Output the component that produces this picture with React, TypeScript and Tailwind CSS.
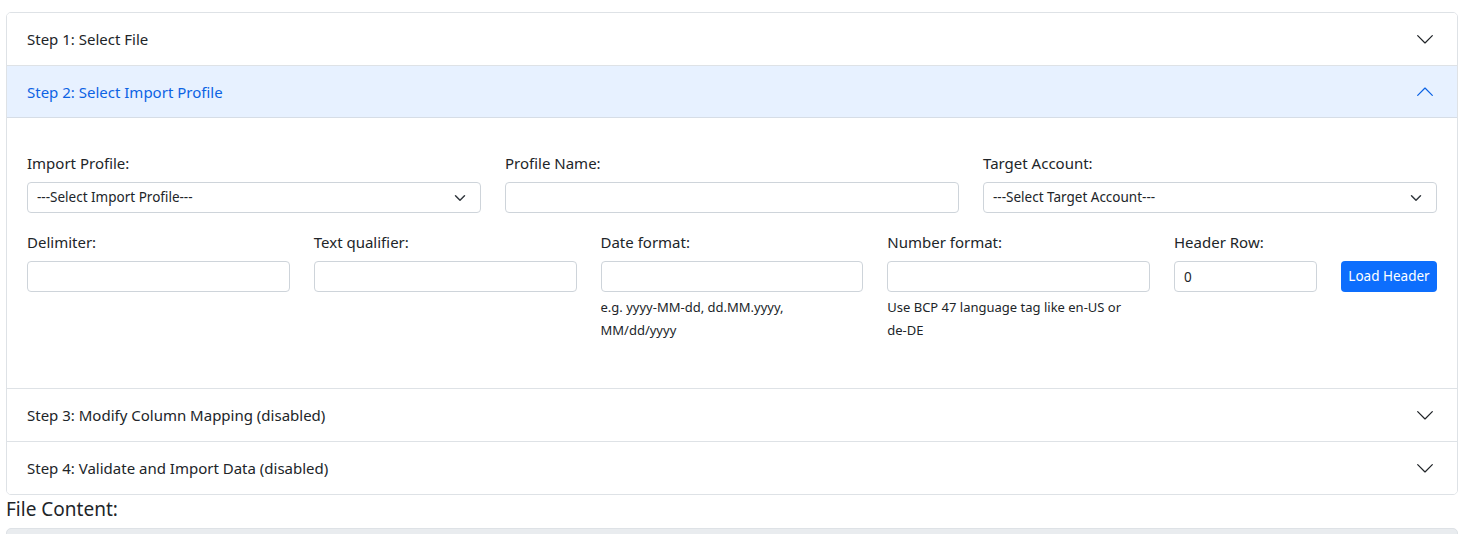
import { useState } from 'react';

const font = { fontFamily: '"Noto Sans", "Open Sans", Arial, sans-serif' };

function Chevron({ up = false, active = false }: { up?: boolean; active?: boolean }) {
  return (
    <svg
      width="18"
      height="18"
      viewBox="0 0 16 16"
      fill="none"
      stroke={active ? '#0c63e4' : '#212529'}
      strokeWidth="1.1"
      className={up ? 'rotate-180' : ''}
    >
      <path d="M1.5 5l6.5 6.5 6.5-6.5" strokeLinecap="round" strokeLinejoin="round" />
    </svg>
  );
}

function SelectBox({ text }: { text: string }) {
  return (
    <div className="flex h-[31px] items-center justify-between rounded-[4px] border border-[#ced4da] bg-white pl-[9px] pr-[14px] text-[13.5px] text-[#212529]">
      <span>{text}</span>
      <svg width="12" height="12" viewBox="0 0 16 16" fill="none" stroke="#343a40" strokeWidth="2">
        <path d="M2 5l6 6 6-6" strokeLinecap="round" strokeLinejoin="round" />
      </svg>
    </div>
  );
}

function TextBox({ value = '' }: { value?: string }) {
  return (
    <input
      readOnly
      value={value}
      className="h-[31px] w-full rounded-[4px] border border-[#ced4da] bg-white px-[9px] text-[13.5px] text-[#212529] outline-none"
    />
  );
}

function Field({ label, children, help }: { label: string; children: React.ReactNode; help?: React.ReactNode }) {
  return (
    <div className="flex flex-col">
      <label className="mb-[8px] text-[15px] leading-[22px] text-[#212529]">{label}</label>
      {children}
      {help && <p className="mt-[4px] max-w-[240px] text-[13px] leading-[23px] text-[#212529]">{help}</p>}
    </div>
  );
}

function Header({ title, open, onClick }: { title: string; open?: boolean; onClick?: () => void }) {
  return (
    <button
      onClick={onClick}
      className={`flex h-[52px] w-full items-center justify-between px-5 text-left text-[15px] ${
        open ? 'bg-[#e7f1ff] text-[#0c63e4] shadow-[inset_0_-1px_0_#d6dde6]' : 'bg-white text-[#212529]'
      }`}
    >
      <span>{title}</span>
      <span className="mr-[3px]">
        <Chevron up={open} active={open} />
      </span>
    </button>
  );
}

export default function App() {
  const [open, setOpen] = useState(2);

  return (
    <div className="min-h-screen bg-white pl-[6px] pr-[8px] pt-[12px]" style={font}>
      {/* Accordion */}
      <div className="overflow-hidden rounded-[5px] border border-[#dee2e6]">
        <Header title="Step 1: Select File" open={open === 1} onClick={() => setOpen(1)} />
        <div className="border-t border-[#dee2e6]">
          <Header title="Step 2: Select Import Profile" open={open === 2} onClick={() => setOpen(2)} />
          {open === 2 && (
            <div className="px-5 pb-[46px] pt-[34px]">
              <div className="grid grid-cols-3 gap-x-6">
                <Field label="Import Profile:">
                  <SelectBox text="---Select Import Profile---" />
                </Field>
                <Field label="Profile Name:">
                  <TextBox />
                </Field>
                <Field label="Target Account:">
                  <SelectBox text="---Select Target Account---" />
                </Field>
              </div>
              <div className="mt-[18px] grid grid-cols-[repeat(4,1fr)_143px_96px] gap-x-6">
                <Field label="Delimiter:">
                  <TextBox />
                </Field>
                <Field label="Text qualifier:">
                  <TextBox />
                </Field>
                <Field label="Date format:" help="e.g. yyyy-MM-dd, dd.MM.yyyy, MM/dd/yyyy">
                  <TextBox />
                </Field>
                <Field
                  label="Number format:"
                  help={
                    <>
                      Use BCP 47 language tag like en-US or <span className="whitespace-nowrap">de-DE</span>
                    </>
                  }
                >
                  <TextBox />
                </Field>
                <Field label="Header Row:">
                  <TextBox value="0" />
                </Field>
                <div className="flex flex-col justify-start pt-[30px]">
                  <button className="h-[31px] rounded-[4px] bg-[#0d6efd] text-[13.5px] text-white">Load Header</button>
                </div>
              </div>
            </div>
          )}
        </div>
        <div className="border-t border-[#dee2e6]">
          <Header title="Step 3: Modify Column Mapping (disabled)" />
        </div>
        <div className="border-t border-[#dee2e6]">
          <Header title="Step 4: Validate and Import Data (disabled)" />
        </div>
      </div>

      <h5 className="mt-[3px] text-[19px] leading-[23px] text-[#212529]">File Content:</h5>
      <div className="mt-[7px] h-[60px] rounded-[5px] border border-[#dee2e6] bg-[#e9ecef]" />
    </div>
  );
}
